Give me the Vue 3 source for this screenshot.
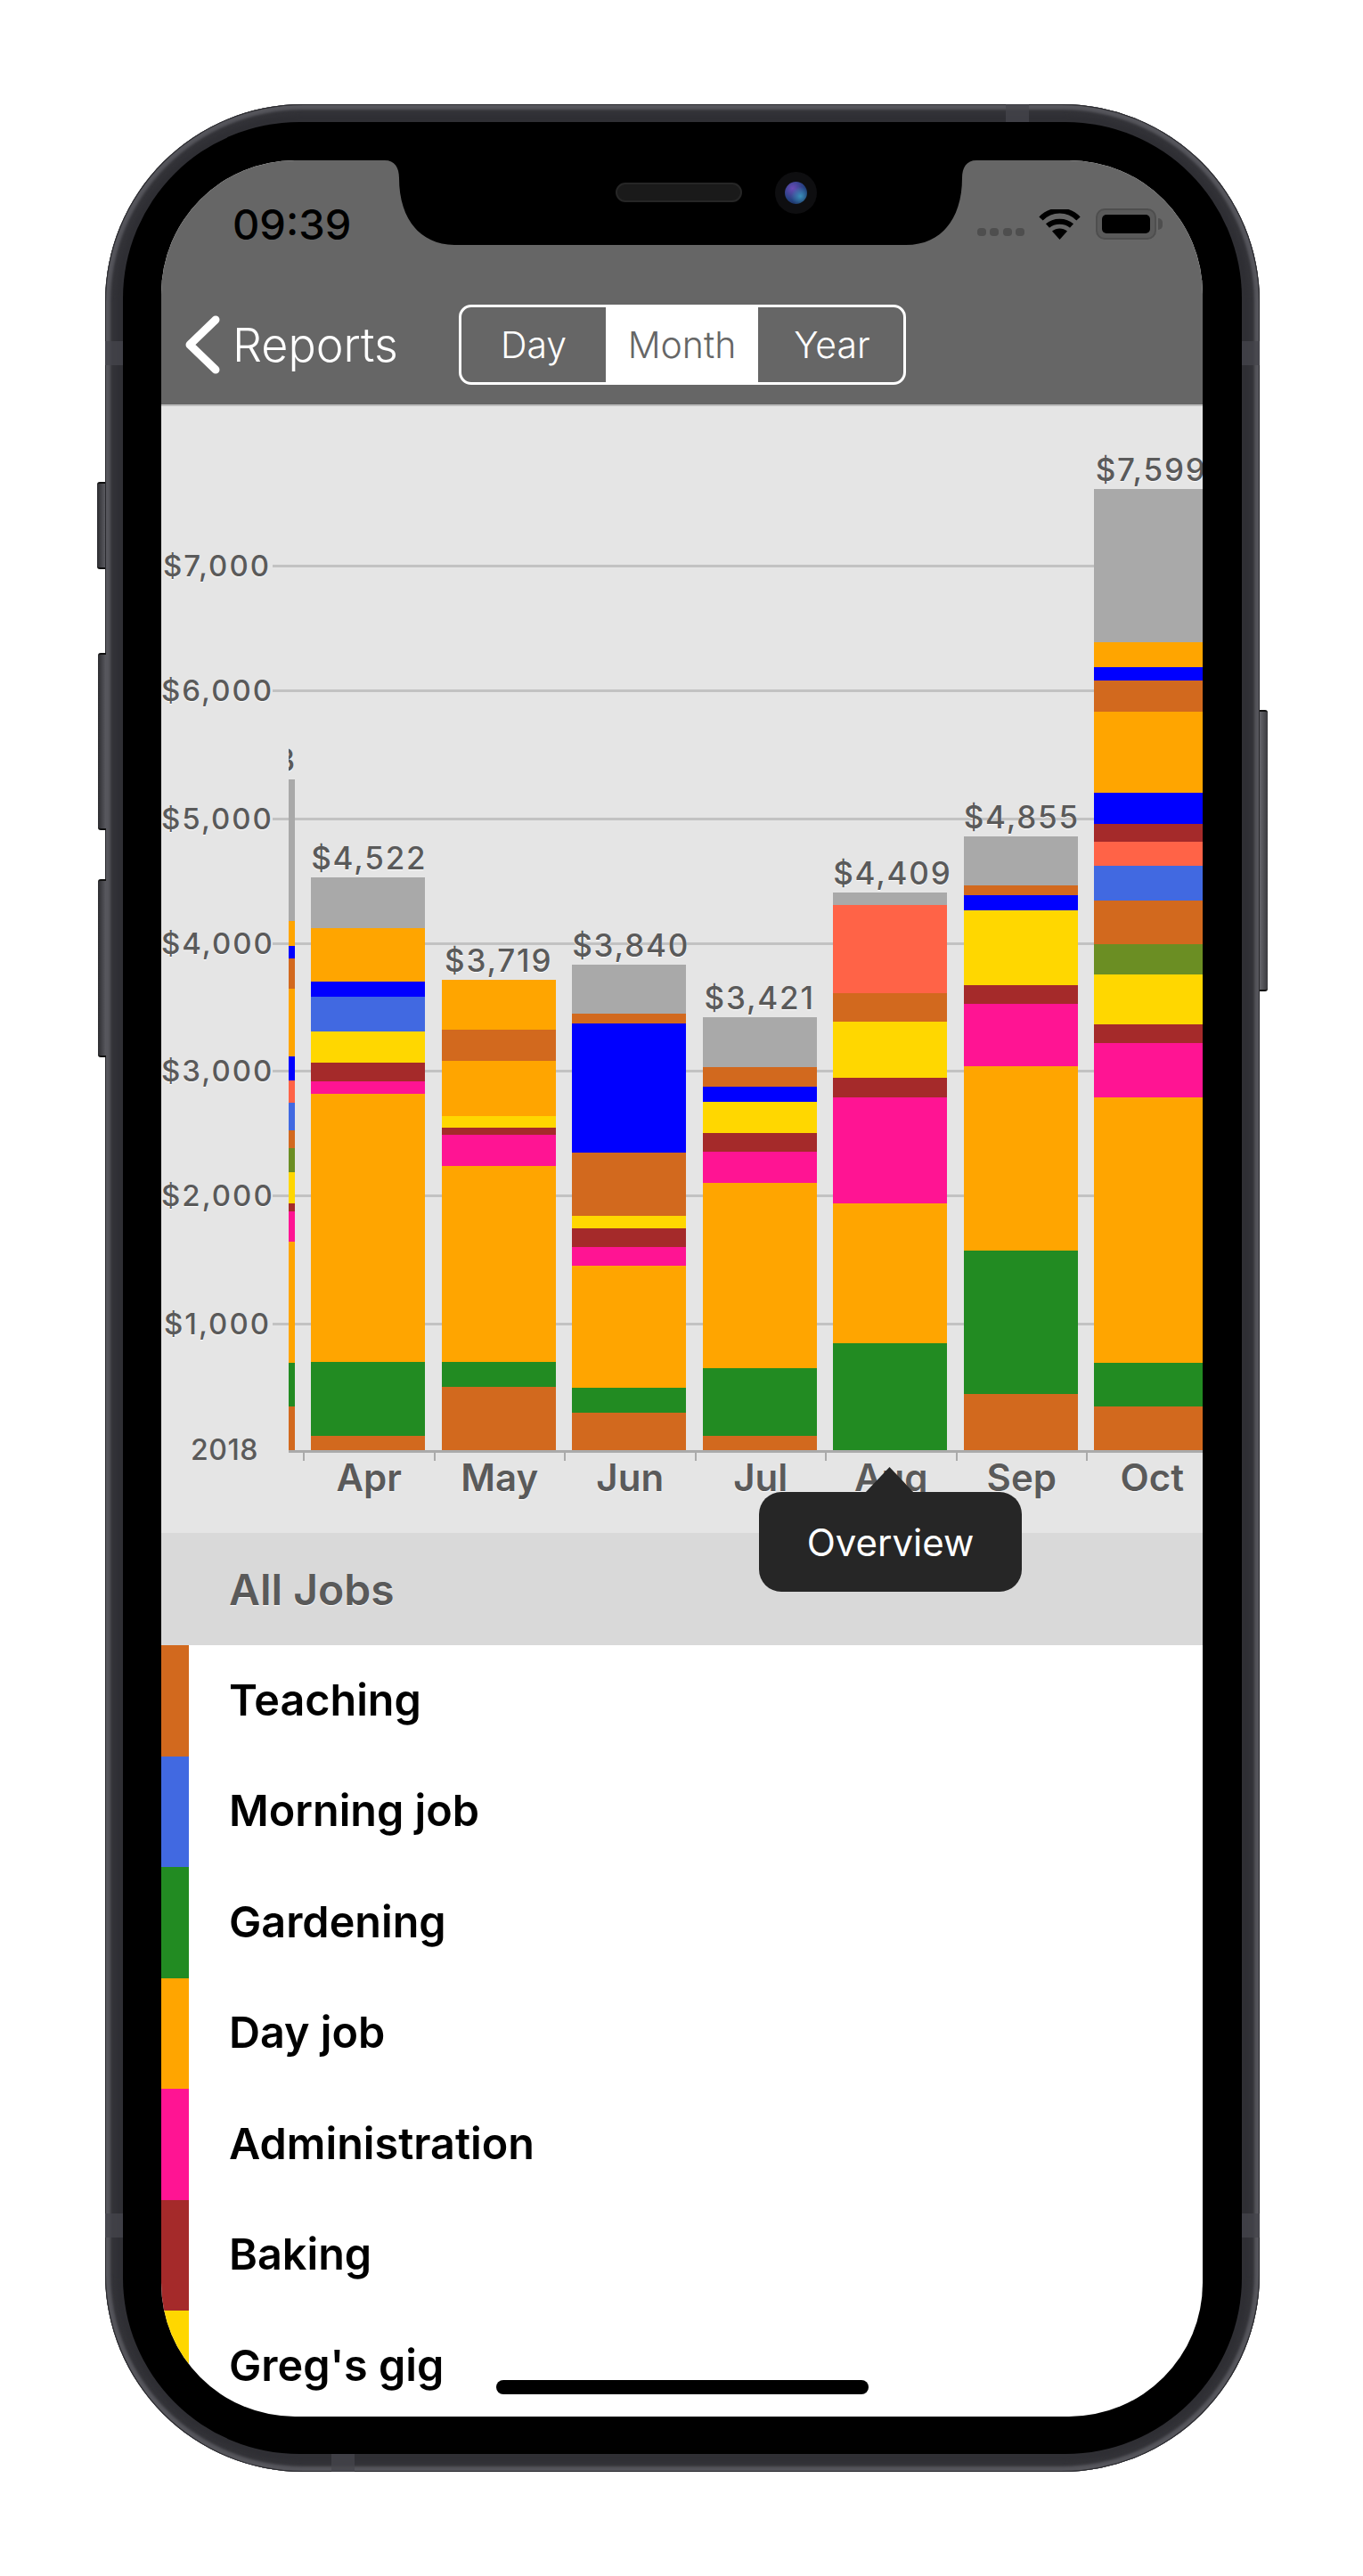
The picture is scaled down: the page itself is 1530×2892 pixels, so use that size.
<script setup>
const C = {
  choc: '#d2691e',
  green: '#228b22',
  orange: '#ffa500',
  pink: '#ff1493',
  brown: '#a52a2a',
  gold: '#ffd700',
  blue: '#0000ff',
  royal: '#4169e1',
  gray: '#a9a9a9',
  tomato: '#ff6347',
  olive: '#6b8e23'
}

// each month: where the bar starts, then [colour, y where the segment ends]
const rawMonths = [
  { name: 'Mar', total: '$5,303', top: 875, parts: [['gray', 1034], ['orange', 1062], ['blue', 1076], ['choc', 1110], ['orange', 1186], ['blue', 1213], ['tomato', 1238], ['royal', 1269], ['choc', 1289], ['olive', 1316], ['gold', 1351], ['brown', 1360], ['pink', 1394], ['orange', 1530], ['green', 1579], ['choc', 1628]] },
  { name: 'Apr', total: '$4,522', top: 985, parts: [['gray', 1041.7], ['orange', 1102], ['blue', 1118.7], ['royal', 1158], ['gold', 1193], ['brown', 1214], ['pink', 1227.7], ['orange', 1529], ['green', 1612], ['choc', 1628]] },
  { name: 'May', total: '$3,719', top: 1100, parts: [['orange', 1156], ['choc', 1191], ['orange', 1252.7], ['gold', 1266], ['brown', 1274.3], ['pink', 1309], ['orange', 1529], ['green', 1557], ['choc', 1628]] },
  { name: 'Jun', total: '$3,840', top: 1083.3, parts: [['gray', 1138], ['choc', 1149.3], ['blue', 1294], ['choc', 1365], ['gold', 1379.3], ['brown', 1400], ['pink', 1421], ['orange', 1558], ['green', 1586], ['choc', 1628]] },
  { name: 'Jul', total: '$3,421', top: 1142.3, parts: [['gray', 1197.7], ['choc', 1220.3], ['blue', 1236.7], ['gold', 1272], ['brown', 1293], ['pink', 1328], ['orange', 1536], ['green', 1612], ['choc', 1628]] },
  { name: 'Aug', total: '$4,409', top: 1002, parts: [['gray', 1015.7], ['tomato', 1115.3], ['choc', 1146.7], ['gold', 1210], ['brown', 1232], ['pink', 1351], ['orange', 1508], ['green', 1628]] },
  { name: 'Sep', total: '$4,855', top: 938.7, parts: [['gray', 993.7], ['choc', 1005], ['blue', 1021.7], ['gold', 1106], ['brown', 1126.7], ['pink', 1197.3], ['orange', 1404.3], ['green', 1565.3], ['choc', 1628]] },
  { name: 'Oct', total: '$7,599', top: 549, parts: [['gray', 721.2], ['orange', 749], ['blue', 764], ['choc', 799], ['orange', 889.6], ['blue', 925], ['brown', 944.7], ['tomato', 971.9], ['royal', 1011.3], ['choc', 1059.5], ['olive', 1094.4], ['gold', 1150.3], ['brown', 1171.3], ['pink', 1231.8], ['orange', 1530], ['green', 1579], ['choc', 1628]] }
]

const months = rawMonths.map((m) => {
  let y = m.top
  const segs = m.parts.map(([key, end]) => {
    const seg = { color: C[key], height: end - y }
    y = end
    return seg
  })
  return { ...m, segs }
})

const axisMonths = months.slice(1)

const grid = [
  { label: '$7,000', y: 635 },
  { label: '$6,000', y: 775 },
  { label: '$5,000', y: 919 },
  { label: '$4,000', y: 1059 },
  { label: '$3,000', y: 1202 },
  { label: '$2,000', y: 1342 },
  { label: '$1,000', y: 1486 }
]

const jobs = [
  { name: 'Teaching', color: C.choc },
  { name: 'Morning job', color: C.royal },
  { name: 'Gardening', color: C.green },
  { name: 'Day job', color: C.orange },
  { name: 'Administration', color: C.pink },
  { name: 'Baking', color: C.brown },
  { name: "Greg's gig", color: C.gold }
]
</script>

<template>
  <div class="page">
    <div class="frame">
      <span class="btn btn-mute"></span>
      <span class="btn btn-up"></span>
      <span class="btn btn-down"></span>
      <span class="btn btn-power"></span>
      <span class="band band-top"></span>
      <span class="band band-left"></span>
      <span class="band band-right"></span>
      <span class="band band-left2"></span>
      <span class="band band-right2"></span>
      <span class="band band-bottom"></span>

      <div class="bezel">
        <div class="screen">
          <header class="top">
            <div class="status">
              <span class="time">09:39</span>
              <div class="status-icons">
                <div class="dots"><i></i><i></i><i></i><i></i></div>
                <svg class="wifi" width="47" height="34" viewBox="0 0 47 34">
                  <path d="M2.5 10.5C14-1.5 33-1.5 44.5 10.5" fill="none" stroke="#000" stroke-width="6" />
                  <path d="M10 18.5C17 12 30 12 37 18.5" fill="none" stroke="#000" stroke-width="6" />
                  <path d="M23.5 34L15 24.5C20 20.5 27 20.5 32 24.5Z" fill="#000" />
                </svg>
                <div class="battery"><div class="battery-fill"></div></div>
                <div class="battery-nub"></div>
              </div>
            </div>
            <nav class="nav">
              <div class="back">
                <svg width="40" height="66" viewBox="0 0 40 66">
                  <path d="M35 5L6 33L35 61" fill="none" stroke="#fff" stroke-width="9" stroke-linecap="round" stroke-linejoin="round" />
                </svg>
                <span>Reports</span>
              </div>
              <div class="segments">
                <div class="seg">Day</div>
                <div class="seg active">Month</div>
                <div class="seg year">Year</div>
              </div>
            </nav>
          </header>

          <section class="chart">
            <div v-for="g in grid" :key="g.label" class="grid-row" :style="{ top: g.y - 456 - 20 + 'px' }">
              <span class="grid-label">{{ g.label }}</span>
              <span class="grid-line"></span>
            </div>

            <div class="plot">
              <div v-for="(m, i) in months" :key="m.name" class="col" :class="{ clipped: i === 0 }">
                <div class="col-inner">
                  <div class="total">{{ m.total }}</div>
                  <div v-for="(s, j) in m.segs" :key="j" :style="{ height: s.height + 'px', background: s.color }"></div>
                </div>
              </div>
            </div>

            <div class="axis">
              <span class="year-label">2018</span>
              <div v-for="m in axisMonths" :key="m.name" class="month">{{ m.name }}</div>
            </div>
          </section>

          <div class="section-head">All Jobs</div>

          <ul class="jobs">
            <li v-for="j in jobs" :key="j.name">
              <span class="swatch" :style="{ background: j.color }"></span>
              <span class="job-name">{{ j.name }}</span>
            </li>
          </ul>

          <div class="tooltip">
            <span class="tooltip-arrow"></span>
            Overview
          </div>

          <div class="notch">
            <svg width="1169" height="95" viewBox="0 0 1169 95">
              <path d="M251 0C262 0 267 8 267 20C267 65 290 95 330 95H836C876 95 899 65 899 20C899 8 904 0 915 0Z" fill="#000" />
            </svg>
            <span class="speaker"></span>
            <span class="camera"><i></i></span>
          </div>
          <div class="home"></div>
        </div>
      </div>
    </div>
  </div>
</template>

<style scoped>
.page {
  width: 1530px;
  height: 2892px;
  box-sizing: border-box;
  padding: 117px 0 0 118px;
  overflow: hidden;
  background: #fff;
  font-family: Inter, "Noto Sans", sans-serif;
}

.frame {
  position: relative;
  width: 1296px;
  height: 2658px;
  box-sizing: border-box;
  padding: 20px;
  border-radius: 222px;
  background: #2f2f34;
  box-shadow: inset 0 0 0 1px #2a2a2e, inset 0 0 3px 6px #56565c, inset 0 0 4px 12px #333338;
}

.btn {
  position: absolute;
  width: 9px;
  box-sizing: border-box;
  background: linear-gradient(90deg, #2c2c30, #5a5a60);
  border-top: 2px solid #111;
  border-bottom: 2px solid #111;
}

.btn-mute { left: -9px; top: 424px; height: 98px; border-radius: 3px 0 0 3px; }
.btn-up { left: -8px; top: 616px; height: 199px; border-radius: 3px 0 0 3px; }
.btn-down { left: -8px; top: 870px; height: 200px; border-radius: 3px 0 0 3px; }
.btn-power {
  right: -9px;
  top: 680px;
  height: 316px;
  border-radius: 0 3px 3px 0;
  background: linear-gradient(270deg, #3a3a3e, #66666c);
}

.band {
  position: absolute;
  background: rgba(70, 70, 76, 0.75);
}

.band-top { left: 1011px; top: 0; width: 26px; height: 20px; }
.band-left { left: 0; top: 266px; width: 20px; height: 27px; }
.band-right { right: 0; top: 266px; width: 20px; height: 27px; }
.band-left2 { left: 0; top: 2368px; width: 20px; height: 27px; }
.band-right2 { right: 0; top: 2368px; width: 20px; height: 27px; }
.band-bottom { left: 254px; bottom: 0; width: 26px; height: 20px; }

.bezel {
  height: 100%;
  box-sizing: border-box;
  padding: 43px 44px 42px 43px;
  border-radius: 198px;
  background: #000;
}

.screen {
  position: relative;
  height: 100%;
  display: flex;
  flex-direction: column;
  overflow: hidden;
  border-radius: 150px;
  background: #fff;
}

.top {
  flex: none;
  height: 276px;
  box-sizing: border-box;
  background: #666;
  border-bottom: 2px solid #bdbdbd;
}

.status {
  height: 143px;
  display: flex;
  align-items: center;
  justify-content: space-between;
  padding: 0 45px 0 80px;
}

.time {
  font-size: 47px;
  font-weight: 500;
  color: #000;
}

.status-icons {
  display: flex;
  align-items: center;
}

.dots {
  display: flex;
  gap: 4.5px;
  margin: 18px 16px 0 0;
}

.dots i {
  width: 10px;
  height: 9px;
  border-radius: 4px;
  background: #4e4e4e;
}

.wifi {
  margin-right: 17px;
}

.battery {
  width: 68px;
  height: 35px;
  box-sizing: border-box;
  padding: 5px;
  border: 2px solid #4e4e4e;
  border-radius: 10px;
  background: #5a5a5a;
}

.battery-fill {
  height: 100%;
  border-radius: 5px;
  background: #000;
}

.battery-nub {
  width: 5px;
  height: 13px;
  margin-left: 2px;
  border-radius: 0 6px 6px 0;
  background: #4e4e4e;
}

.nav {
  height: 131px;
  box-sizing: border-box;
  display: flex;
  align-items: center;
  padding: 0 0 3px 26px;
}

.back {
  width: 308px;
  display: flex;
  align-items: center;
  gap: 14px;
  color: #fff;
  font-size: 52px;
  font-weight: 300;
}

.segments {
  width: 502px;
  height: 90px;
  box-sizing: border-box;
  display: grid;
  grid-template-columns: 162px 171px 1fr;
  border: 3px solid #fff;
  border-radius: 14px;
  color: #fff;
  font-size: 41px;
  font-weight: 300;
}

.seg {
  display: flex;
  align-items: center;
  justify-content: center;
}

.seg.active {
  background: #fff;
  color: #666;
}

.seg.year {
  padding-left: 3px;
}

.chart {
  flex: none;
  position: relative;
  height: 1265px;
  overflow: hidden;
  background: #e5e5e5;
}

.grid-row {
  position: absolute;
  left: 0;
  right: 0;
  height: 40px;
  display: flex;
  align-items: center;
}

.grid-label {
  width: 123px;
  flex: none;
  text-align: right;
  font-size: 33px;
  font-weight: 500;
  letter-spacing: 2px;
  line-height: 40px;
  color: #5a5a5a;
  text-shadow: 0 1px 1px #fff;
}

.grid-line {
  flex: 1;
  height: 3px;
  margin-left: 2px;
  background: #c2c2c2;
}

.plot {
  position: relative;
  height: 1172px;
  display: flex;
  align-items: flex-end;
  gap: 18.5px;
  padding-left: 143.3px;
}

.col {
  flex: none;
  width: 128px;
}

.col.clipped {
  width: 6.4px;
  overflow: hidden;
}

.col-inner {
  width: 128px;
}

.col.clipped .col-inner {
  margin-left: -121.6px;
}

.total {
  height: 42px;
  line-height: 40px;
  text-align: center;
  white-space: nowrap;
  font-size: 35px;
  font-weight: 500;
  letter-spacing: 1.8px;
  color: #5a5a5a;
  text-shadow: 0 1px 1px #fff;
}

.axis {
  position: relative;
  display: flex;
  margin-left: 143px;
  padding-left: 17px;
  border-top: 3px solid #aaa;
}

.year-label {
  position: absolute;
  left: -110px;
  top: -21px;
  font-size: 32px;
  font-weight: 500;
  letter-spacing: 0.5px;
  line-height: 36px;
  color: #5a5a5a;
}

.month {
  position: relative;
  flex: none;
  width: 146.5px;
  text-align: center;
  font-size: 42px;
  font-weight: 600;
  line-height: 56px;
  color: #5a5a5a;
  text-shadow: 0 1px 1px #fff;
}

.month::before {
  content: "";
  position: absolute;
  left: -1px;
  top: 0;
  width: 2px;
  height: 9px;
  background: #aaa;
}

.section-head {
  flex: none;
  height: 126px;
  display: flex;
  align-items: center;
  padding-left: 76px;
  background: #d9d9d9;
  color: #5a5a5a;
  font-size: 48px;
  font-weight: 600;
  text-shadow: 0 1px 1px #fff;
}

.jobs {
  list-style: none;
  margin: 0;
  padding: 0;
}

.jobs li {
  height: 124.5px;
  display: flex;
  align-items: center;
}

.swatch {
  flex: none;
  align-self: stretch;
  width: 31px;
}

.job-name {
  margin: -2px 0 0 45px;
  font-size: 48.5px;
  font-weight: 600;
  color: #000;
}

.tooltip {
  position: absolute;
  left: 671px;
  top: 1495px;
  width: 295px;
  height: 112px;
  display: flex;
  align-items: center;
  justify-content: center;
  border-radius: 25px;
  background: #262626;
  color: #fff;
  font-size: 42px;
}

.tooltip-arrow {
  position: absolute;
  left: 119px;
  top: -28px;
  width: 55px;
  height: 29px;
  background: #262626;
  clip-path: polygon(50% 0, 100% 100%, 0 100%);
}

.notch {
  position: absolute;
  left: 0;
  top: 0;
  width: 100%;
  height: 95px;
}

.notch svg {
  display: block;
}

.speaker {
  position: absolute;
  left: 510px;
  top: 25px;
  width: 142px;
  height: 22px;
  box-sizing: border-box;
  border: 2px solid #262626;
  border-radius: 11px;
  background: #1a1a1a;
}

.camera {
  position: absolute;
  left: 689px;
  top: 13px;
  width: 47px;
  height: 47px;
  display: flex;
  align-items: center;
  justify-content: center;
  border-radius: 50%;
  background: #0e0e10;
}

.camera i {
  width: 25px;
  height: 25px;
  border-radius: 50%;
  background:
    radial-gradient(circle at 70% 65%, rgba(60, 150, 190, 0.9), transparent 45%),
    radial-gradient(circle at 35% 30%, #6a4bb5, #23407f 55%, #14203f);
}

.home {
  position: absolute;
  left: 376px;
  top: 2492px;
  width: 418px;
  height: 16px;
  border-radius: 8px;
  background: #000;
}
</style>
